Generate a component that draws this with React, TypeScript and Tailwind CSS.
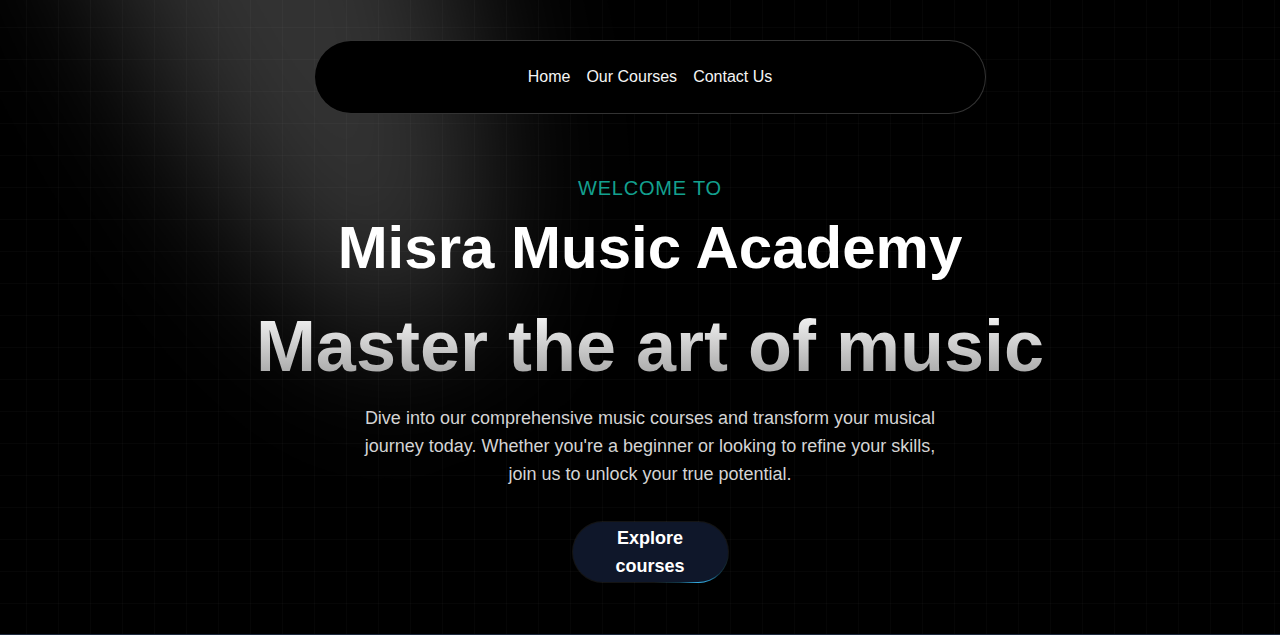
export default function App() {
  return (
    <div className="min-h-screen bg-black font-['Liberation_Sans',Arial,sans-serif] text-white">
      <section className="relative h-[634px] overflow-hidden bg-black bg-[linear-gradient(to_right,rgba(255,255,255,0.022)_1px,transparent_1px),linear-gradient(to_bottom,rgba(255,255,255,0.022)_1px,transparent_1px)] [background-size:32px_32px] [background-position:26px_27px]">
        {/* spotlight */}
        <div className="pointer-events-none absolute left-[-325px] top-[-340px] h-[340px] w-[1100px] rotate-[68deg] rounded-[50%] bg-white/20 blur-[70px]" />

        <div className="relative z-10 flex flex-col items-center pl-5 pt-10">
          <nav className="flex w-full max-w-2xl justify-center space-x-4 rounded-full border border-white/20 bg-black px-8 py-6 text-base text-neutral-100">
            <a href="#">Home</a>
            <a href="#">Our Courses</a>
            <a href="#">Contact Us</a>
          </nav>

          <p className="mt-[60px] text-xl leading-7 tracking-[0.04em] text-[#13a08f]">WELCOME TO</p>
          <h1 className="mt-4 text-6xl leading-none font-bold text-white">Misra Music Academy</h1>
          <h2 className="mt-8 bg-linear-to-b from-neutral-50 to-neutral-400 bg-clip-text text-7xl leading-none font-bold text-transparent">
            Master the art of music
          </h2>
          <p className="mt-[22px] max-w-xl text-center text-lg leading-7 text-neutral-300">
            Dive into our comprehensive music courses and transform your musical journey today. Whether you're a beginner or looking to refine your skills, join us to unlock your true potential.
          </p>

          <span className="mt-[33px] rounded-full bg-[radial-gradient(30%_60%_at_82%_100%,#38bdf8_0%,rgba(56,189,248,0.3)_45%,rgba(255,255,255,0.08)_100%)] p-px">
            <button className="block w-[155px] rounded-full bg-[#0f172a] px-10 py-[2px] text-lg leading-7 font-bold text-white">
              Explore courses
            </button>
          </span>
        </div>
      </section>
      <section className="h-40 border-t border-slate-800 bg-[#020617]" />
    </div>
  );
}
